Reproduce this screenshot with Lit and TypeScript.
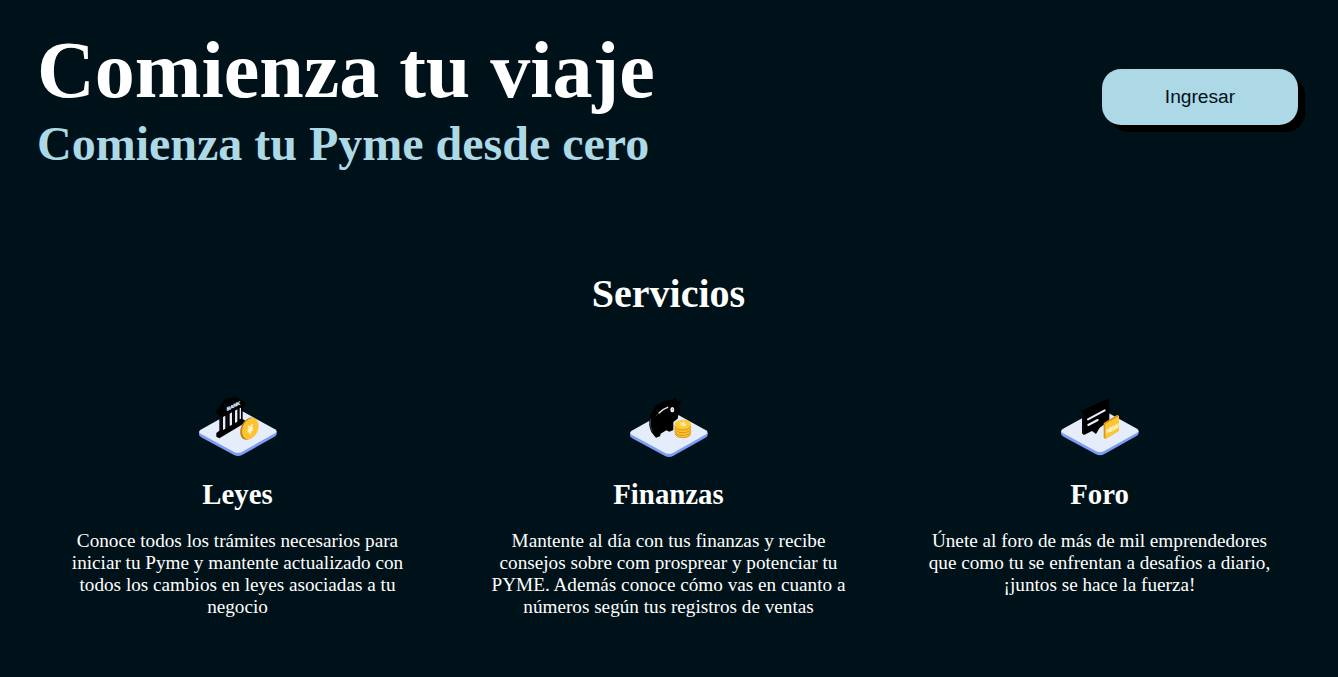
import { LitElement, html, css, svg } from "lit";
import { customElement } from "lit/decorators.js";

const platform = (drop: number) => svg`
  <path d="M27 ${131 + drop} V${140 + drop} Q28 ${145 + drop} 36 ${149 + drop} L132 ${201 + drop} Q144 ${207 + drop} 156 ${201 + drop} L252 ${147 + drop} Q261 ${143 + drop} 261 ${131 + drop} Z" fill="#7b9df5"/>
  <path d="M32 ${125 + drop} L131 ${70 + drop} Q144 ${64 + drop} 157 ${70 + drop} L255 ${124 + drop} Q264 ${130 + drop} 255 ${136 + drop} L157 ${191 + drop} Q144 ${198 + drop} 131 ${191 + drop} L32 ${137 + drop} Q23 ${131 + drop} 32 ${125 + drop} Z" fill="#e6edfa"/>`;

const bank = svg`
  ${platform(0)}
  <path d="M78 68 L106 33 L138 27 L165 42 V53 L158 60 V93 L166 98 V104 L88 151 L79 146 V135 L88 128 V82 L78 77 Z" fill="#000"/>
  <path d="M99 87 L106 83 V122 L99 126 Z M119 77 L126 73 V110 L119 114 Z M135 68 L142 64 V101 L135 105 Z M149 61 L153 59 V92 L149 94 Z" fill="#e6edfa"/>
  <path d="M93 88 V127 M112 80 V120 M130 71 V110" stroke="#24282e" stroke-width="1.5" fill="none"/>
  <text class="bank" transform="matrix(1 -.49 0 1 110 69)">BANK</text>
  <ellipse cx="176" cy="122" rx="23" ry="35" transform="rotate(24 176 122)" fill="#b98220"/>
  <ellipse cx="181" cy="122" rx="23" ry="33" transform="rotate(24 181 122)" fill="#fdc42f"/>
  <path d="M174 113 L181 121 L187 108 M181 121 V137 M173 126 L189 119 M173 132 L189 125" stroke="#fff7dd" stroke-width="4.5" fill="none"/>`;

const piggy = svg`
  ${platform(3)}
  <path d="M119 44 Q139 34 153 36 L166 27 V38 L181 40 L173 53 Q181 65 173 75 L170 92 L157 102 V126 L145 131 L136 127 L119 137 L117 145 L105 149 L96 139 Q83 124 85 97 Q89 60 119 44 Z" fill="#000"/>
  <path d="M114 75 Q123 64 140 58" stroke="#e7e9ee" stroke-width="4.5" fill="none" stroke-linecap="round"/>
  <path d="M106 83 L110 78 M89 92 Q85 113 94 130" stroke="#777b82" stroke-width="1.5" fill="none"/>
  <ellipse cx="154" cy="65" rx="6" ry="8" fill="#eef4ff"/>
  <path d="M155 61 V66 H158" stroke="#5d7390" stroke-width="1.5" fill="none"/>
  <path d="M161 107 V137 Q164 149 185 149 Q206 149 210 137 V107 Z" fill="#fdc42f"/>
  <path d="M161 114 Q166 126 185 126 Q204 126 210 114 M161 122 Q166 134 185 134 Q204 134 210 122 M161 130 Q166 142 185 142 Q204 142 210 130 M162 138 Q168 149 185 149 Q204 149 209 138" stroke="#cf8918" stroke-width="2.5" fill="none"/>
  <ellipse cx="185.500" cy="108" rx="24.500" ry="13" fill="#fdc936"/>
  <path d="M176 104 L186 107 L188 101 M186 107 L194 113 M178 111 L192 104 M182 115 L196 108" stroke="#fff5d4" stroke-width="3" fill="none"/>`;

const forum = svg`
  ${platform(-2)}
  <path d="M90 68 L166 32 L172 35 V98 L143 119 L132 138 L120 129 L96 141 L90 136 Z" fill="#000"/>
  <path d="M93 74 V134" stroke="#22262b" stroke-width="1.500"/>
  <path d="M108 94 L158 67 M109 111 L137 96" stroke="#eaf0fa" stroke-width="6" stroke-linecap="round"/>
  <path d="M155 105 L196 80 L201 84 V128 L160 153 L155 149 Z" fill="#dc951c"/>
  <path d="M160 108 L201 84 V128 L160 152 Z" fill="#fdc633"/>
  <text class="new" transform="matrix(1 -.48 0 1 163 137)">NEW</text>`;

const services = [
  { title: "Leyes", icon: bank, text: "Conoce todos los trámites necesarios para iniciar tu Pyme y mantente actualizado con todos los cambios en leyes asociadas a tu negocio" },
  { title: "Finanzas", icon: piggy, text: "Mantente al día con tus finanzas y recibe consejos sobre com prosprear y potenciar tu PYME. Además conoce cómo vas en cuanto a números según tus registros de ventas" },
  { title: "Foro", icon: forum, text: "Únete al foro de más de mil emprendedores que como tu se enfrentan a desafios a diario, ¡juntos se hace la fuerza!" },
];

@customElement("app-root")
export class AppRoot extends LitElement {
  static styles = css`
    :host {
      display: block;
      box-sizing: border-box;
      height: 677px;
      overflow: hidden;
      background: #001219;
      color: #fff;
      font-family: "Liberation Serif", "Times New Roman", serif;
    }
    h1, h2, h3, p { margin: 0; }
    header {
      display: flex;
      justify-content: space-between;
      align-items: flex-start;
      padding: 24px 40px 0 37px;
    }
    .title { font-size: 80px; line-height: 92px; }
    .subtitle { font-size: 48px; line-height: 55px; color: lightblue; }
    .enter {
      margin-top: 45px;
      width: 196px;
      height: 56px;
      padding: 0;
      border: 0;
      border-radius: 19px;
      background: lightblue;
      color: #001219;
      box-shadow: 7px 7px 0 #000;
      font: 19.2px "Liberation Sans", Arial, sans-serif;
    }
    main { padding-right: 1px; }
    .heading {
      margin-top: 100px;
      font-size: 40px;
      line-height: 46px;
      text-align: center;
    }
    .services {
      display: grid;
      grid-template-columns: repeat(3, 362px);
      column-gap: 69px;
      justify-content: center;
      margin-top: 71px;
      text-align: center;
    }
    .icon { display: block; width: 96px; height: 76px; margin: 0 auto; }
    .name { margin-top: 13px; font-size: 28.8px; line-height: 34px; }
    .text { margin-top: 19px; font-size: 19.2px; line-height: 22px; }
    .bank { font: bold 15px "Liberation Sans", sans-serif; fill: #dce9ff; stroke: #dce9ff; stroke-width: 1px; letter-spacing: -1px; }
    .new { font: bold 18px "Liberation Sans", sans-serif; fill: #fff5d2; stroke: #fff5d2; stroke-width: 1px; letter-spacing: -2px; }
  `;

  render() {
    return html`
      <header>
        <div>
          <h1 class="title">Comienza tu viaje</h1>
          <h2 class="subtitle">Comienza tu Pyme desde cero</h2>
        </div>
        <button class="enter">Ingresar</button>
      </header>
      <main>
        <h2 class="heading">Servicios</h2>
        <div class="services">
          ${services.map((s) => html`
            <article>
              <svg class="icon" viewBox="0 0 288 228" aria-hidden="true">${s.icon}</svg>
              <h3 class="name">${s.title}</h3>
              <p class="text">${s.text}</p>
            </article>`)}
        </div>
      </main>`;
  }
}
